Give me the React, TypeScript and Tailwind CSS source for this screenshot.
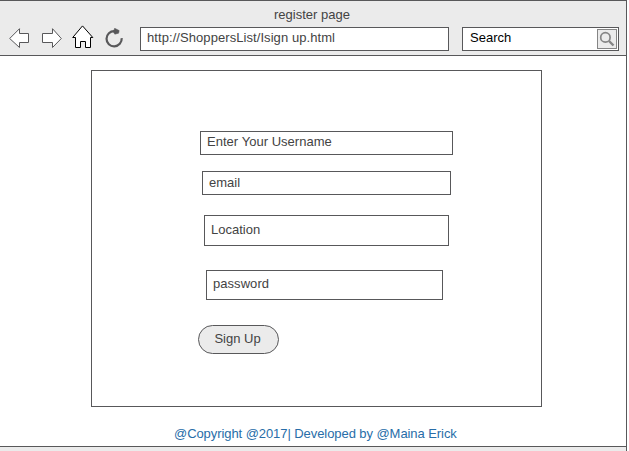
const border = "border border-[#58585a]";

function NavIcons() {
  return (
    <div className="ml-[9px] flex h-6 items-start">
      <svg className="mt-px h-5 w-5" viewBox="0 0 20 20" fill="#fff" stroke="#58585a">
        <path d="M.7 10.5 10.5.7V5.5H19.5V14.5H10.5V19.5Z" />
      </svg>
      <svg className="ml-[13px] mt-px h-5 w-5" viewBox="0 0 20 20" fill="#fff" stroke="#58585a">
        <path d="M19.3 10.5 10.5.7V5.5H.5V14.5H10.5V19.5Z" />
      </svg>
      <svg className="-mt-[2px] ml-[10px] h-6 w-[22px]" viewBox="0 0 22 24" fill="#fff" stroke="#000">
        <path d="M10.5.9 20.8 12.5H18.5V22.5H13.5V16.5H8.5V22.5H3.5V12.5H.7Z" />
      </svg>
      <svg className="ml-[11px] mt-px h-5 w-[19px]" viewBox="0 0 19 20" fill="none">
        <path d="M9.5 3.2A7.6 7.6 0 1 0 16.7 10.2" stroke="#58585a" strokeWidth="2.2" />
        <path d="M9.6 .2 14.2 2.6 13.6 5.2 9.8 6.2 8.4 4Z" fill="#58585a" stroke="#58585a" strokeWidth=".5" />
      </svg>
    </div>
  );
}

function Field({ text, className }: { text: string; className: string }) {
  return <div className={`${border} bg-white pl-[6px] ${className}`}>{text}</div>;
}

export default function App() {
  return (
    <div className="h-[451px] w-[629px] overflow-hidden bg-white font-['Liberation_Sans',Arial,sans-serif] text-[13px] leading-[15px] whitespace-nowrap text-[#434343]">
      <div className="flex h-full w-[627px] flex-col border-t border-r border-[#58585a]">
        <header className="h-[55px] shrink-0 border-b border-[#58585a] bg-[#ebebeb]">
          <div className="h-[26px] pl-[274px] pt-[6px]">register page</div>
          <div className="flex">
            <div className="w-[140px]"><NavIcons /></div>
            <Field text="http://ShoppersList/Isign up.html" className="h-6 w-[309px] pt-[2px] tracking-[0.07px]" />
            <div className={`${border} ml-[13px] flex h-6 w-[157px] justify-between bg-white pl-[7px] pr-px text-black`}>
              <span className="pt-[2px]">Search</span>
              <span className="mt-px h-5 w-5 border border-[#858585] bg-[#ebebeb]">
                <svg className="h-[18px] w-[18px]" viewBox="0 0 18 18" fill="none" stroke="#858585">
                  <circle cx="7.4" cy="7.4" r="4.7" strokeWidth="1.7" />
                  <path d="m11 11 4.5 4.5" strokeWidth="2.4" />
                </svg>
              </span>
            </div>
          </div>
        </header>
        <main className="h-[390px] shrink-0 pl-[91px] pt-[14px]">
          <form className={`${border} flex h-[337px] w-[451px] flex-col pl-[106px] pt-[60px]`}>
            <Field text="Enter Your Username" className="ml-[2px] h-6 w-[253px] pt-[2px] tracking-[0.03px]" />
            <Field text="email" className="ml-[4px] mt-[16px] h-6 w-[249px] pt-[3px]" />
            <Field text="Location" className="ml-[6px] mt-[20px] h-[31px] w-[245px] pt-[6px]" />
            <Field text="password" className="ml-[8px] mt-[24px] h-[30px] w-[237px] pt-[5px] tracking-[0.05px]" />
            <button type="button" className={`${border} mt-[25px] h-[29px] w-[81px] rounded-full bg-[#ebebeb] pb-[2px] pr-[2px]`}>
              Sign Up
            </button>
          </form>
          <p className="ml-[83px] mt-[19px] tracking-[-0.07px] text-[#286da8]">@Copyright @2017| Developed by @Maina Erick</p>
        </main>
        <footer className="flex-1 border-t border-[#58585a] bg-[#ebebeb]" />
      </div>
    </div>
  );
}
